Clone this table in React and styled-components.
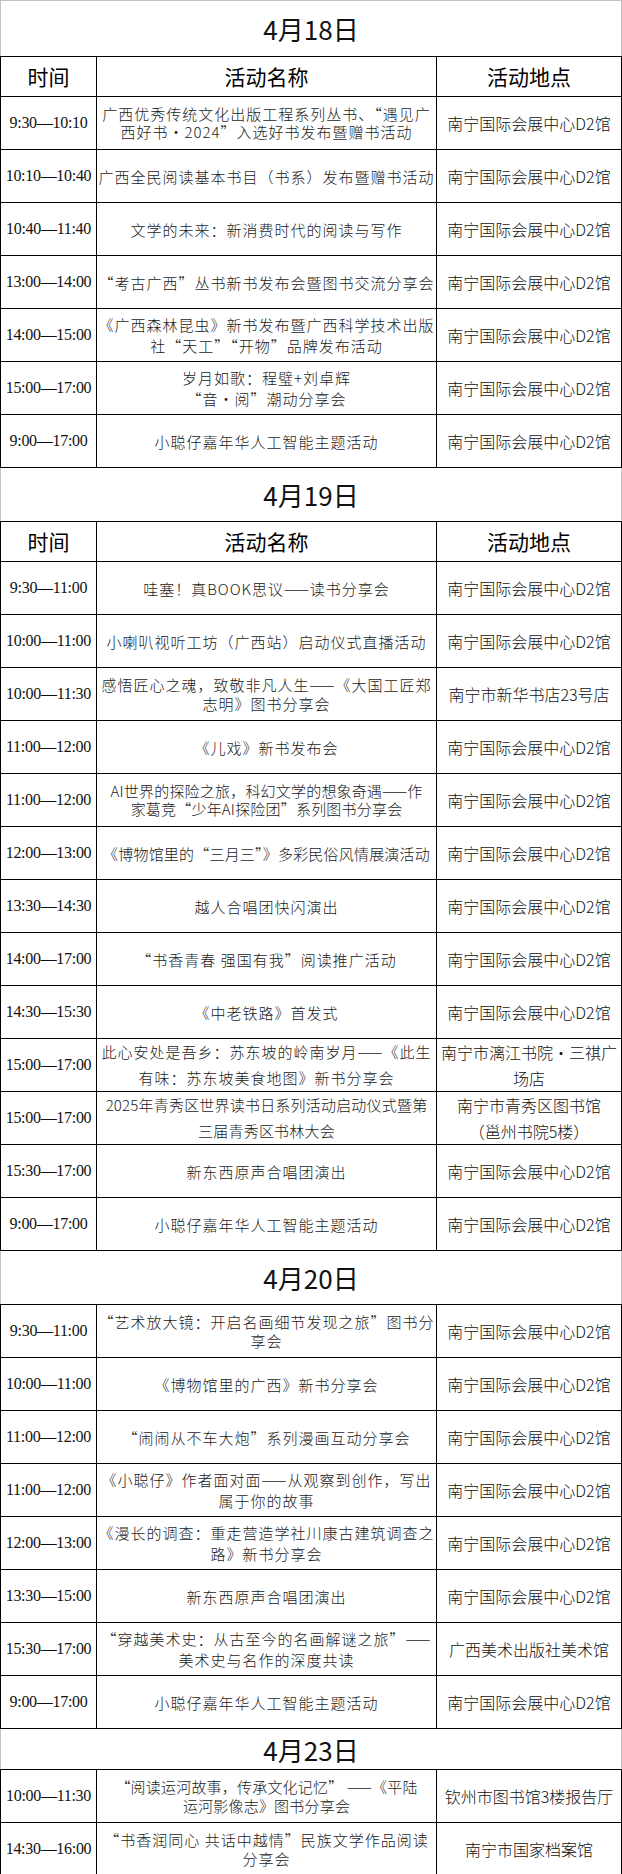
import React from "react";
import styled, { createGlobalStyle } from "styled-components";

const GlobalStyle = createGlobalStyle`
  html, body {
    margin: 0;
    padding: 0;
    background: #fff;
  }
  body {
    font-family: "Noto Sans CJK SC", "Noto Sans", sans-serif;
    color: #000;
  }
`;

const Page = styled.div`
  width: 622px;
  display: flex;
  flex-direction: column;
`;

const DayTitle = styled.div`
  height: ${(p) => p.$h}px;
  box-sizing: border-box;
  border-left: 1px solid #c4c4c4;
  border-right: 1px solid #c4c4c4;
  border-top: ${(p) => (p.$first ? "1px solid #c4c4c4" : "none")};
  display: flex;
  align-items: center;
  justify-content: center;
  font-family: "Noto Sans CJK SC", sans-serif;
  font-size: 26px;
  font-weight: 400;
  color: #111;
`;

const Table = styled.div`
  border-top: 1px solid #000;
  display: flex;
  flex-direction: column;
`;

const Row = styled.div`
  display: grid;
  grid-template-columns: 96px 340px 1fr;
  height: ${(p) => (p.$head ? 40 : 53)}px;
  box-sizing: border-box;
  border-left: 1px solid #000;
  border-right: 1px solid #000;
  border-bottom: 1px solid #000;
`;

const Cell = styled.div`
  display: flex;
  flex-direction: column;
  align-items: center;
  justify-content: center;
  text-align: center;
  white-space: nowrap;
  border-right: ${(p) => (p.$last ? "none" : "1px solid #000")};
`;

const HeadCell = styled(Cell)`
  font-family: "Noto Sans CJK SC", sans-serif;
  font-size: 21px;
  font-weight: 400;
  padding-bottom: 2px;
`;

const TimeCell = styled(Cell)`
  font-family: "Liberation Serif", "Times New Roman", serif;
  font-size: 16px;
  letter-spacing: -0.3px;
  color: #111;
`;

const NameCell = styled(Cell)`
  font-family: "Noto Sans CJK SC", sans-serif;
  font-size: 15px;
  font-weight: 300;
  letter-spacing: ${(p) => (p.$tight ? "0.2px" : "1px")};
  line-height: ${(p) => p.$lh}px;
  color: #1a1a1a;
`;

const PlaceCell = styled(Cell)`
  font-family: "Noto Sans CJK SC", sans-serif;
  font-size: 16px;
  font-weight: 300;
  line-height: ${(p) => p.$lh}px;
  color: #111;
`;

const Line = styled.span`
  display: block;
`;

const D2 = ["南宁国际会展中心D2馆"];

const days = [
  {
    title: "4月18日",
    h: 56,
    head: true,
    rows: [
      { t: "9:30—10:10", n: ["广西优秀传统文化出版工程系列丛书、“遇见广", "西好书·2024”入选好书发布暨赠书活动"], lh: 18 },
      { t: "10:10—10:40", n: ["广西全民阅读基本书目（书系）发布暨赠书活动"] },
      { t: "10:40—11:40", n: ["文学的未来：新消费时代的阅读与写作"] },
      { t: "13:00—14:00", n: ["“考古广西”丛书新书发布会暨图书交流分享会"] },
      { t: "14:00—15:00", n: ["《广西森林昆虫》新书发布暨广西科学技术出版", "社“天工”“开物”品牌发布活动"] },
      { t: "15:00—17:00", n: ["岁月如歌：程璧+刘卓辉", "“音·阅”潮动分享会"] },
      { t: "9:00—17:00", n: ["小聪仔嘉年华人工智能主题活动"] },
    ],
  },
  {
    title: "4月19日",
    h: 53,
    head: true,
    rows: [
      { t: "9:30—11:00", n: ["哇塞！真BOOK思议——读书分享会"] },
      { t: "10:00—11:00", n: ["小喇叭视听工坊（广西站）启动仪式直播活动"] },
      { t: "10:00—11:30", n: ["感悟匠心之魂，致敬非凡人生——《大国工匠郑", "志明》图书分享会"], p: ["南宁市新华书店23号店"], lh: 19 },
      { t: "11:00—12:00", n: ["《儿戏》新书发布会"] },
      { t: "11:00—12:00", n: ["AI世界的探险之旅，科幻文学的想象奇遇——作", "家葛竞“少年AI探险团”系列图书分享会"], tight: true, lh: 18 },
      { t: "12:00—13:00", n: ["《博物馆里的“三月三”》多彩民俗风情展演活动"], tight: true },
      { t: "13:30—14:30", n: ["越人合唱团快闪演出"] },
      { t: "14:00—17:00", n: ["“书香青春 强国有我”阅读推广活动"] },
      { t: "14:30—15:30", n: ["《中老铁路》首发式"] },
      { t: "15:00—17:00", n: ["此心安处是吾乡：苏东坡的岭南岁月——《此生", "有味：苏东坡美食地图》新书分享会"], p: ["南宁市漓江书院·三祺广", "场店"], lh: 26 },
      { t: "15:00—17:00", n: ["2025年青秀区世界读书日系列活动启动仪式暨第", "三届青秀区书林大会"], p: ["南宁市青秀区图书馆", "（邕州书院5楼）"], tight: true, lh: 26 },
      { t: "15:30—17:00", n: ["新东西原声合唱团演出"] },
      { t: "9:00—17:00", n: ["小聪仔嘉年华人工智能主题活动"] },
    ],
  },
  {
    title: "4月20日",
    h: 53,
    head: false,
    rows: [
      { t: "9:30—11:00", n: ["“艺术放大镜：开启名画细节发现之旅”图书分", "享会"], lh: 19 },
      { t: "10:00—11:00", n: ["《博物馆里的广西》新书分享会"] },
      { t: "11:00—12:00", n: ["“闹闹从不车大炮”系列漫画互动分享会"] },
      { t: "11:00—12:00", n: ["《小聪仔》作者面对面——从观察到创作，写出", "属于你的故事"] },
      { t: "12:00—13:00", n: ["《漫长的调查：重走营造学社川康古建筑调查之", "路》新书分享会"] },
      { t: "13:30—15:00", n: ["新东西原声合唱团演出"] },
      { t: "15:30—17:00", n: ["“穿越美术史：从古至今的名画解谜之旅”——", "美术史与名作的深度共读"], p: ["广西美术出版社美术馆"] },
      { t: "9:00—17:00", n: ["小聪仔嘉年华人工智能主题活动"] },
    ],
  },
  {
    title: "4月23日",
    h: 40,
    head: false,
    rows: [
      { t: "10:00—11:30", n: ["“阅读运河故事，传承文化记忆”  ——《平陆", "运河影像志》图书分享会"], p: ["钦州市图书馆3楼报告厅"], tight: true, lh: 19 },
      { t: "14:30—16:00", n: ["“书香润同心 共话中越情”民族文学作品阅读", "分享会"], p: ["南宁市国家档案馆"], lh: 19 },
    ],
  },
];

const Lines = ({ items }) =>
  items.map((t, i) => <Line key={i}>{t}</Line>);

const App = () => (
  <Page>
    <GlobalStyle />
    {days.map((day, di) => (
      <React.Fragment key={day.title}>
        <DayTitle $h={day.h} $first={di === 0}>
          {day.title}
        </DayTitle>
        <Table>
          {day.head && (
            <Row $head>
              <HeadCell>时间</HeadCell>
              <HeadCell>活动名称</HeadCell>
              <HeadCell $last>活动地点</HeadCell>
            </Row>
          )}
          {day.rows.map((row, ri) => (
            <Row key={ri}>
              <TimeCell>{row.t}</TimeCell>
              <NameCell $tight={row.tight} $lh={row.lh || 21}>
                <Lines items={row.n} />
              </NameCell>
              <PlaceCell $last $lh={row.p && row.p.length > 1 ? row.lh : 22}>
                <Lines items={row.p || D2} />
              </PlaceCell>
            </Row>
          ))}
        </Table>
      </React.Fragment>
    ))}
  </Page>
);

export default App;
